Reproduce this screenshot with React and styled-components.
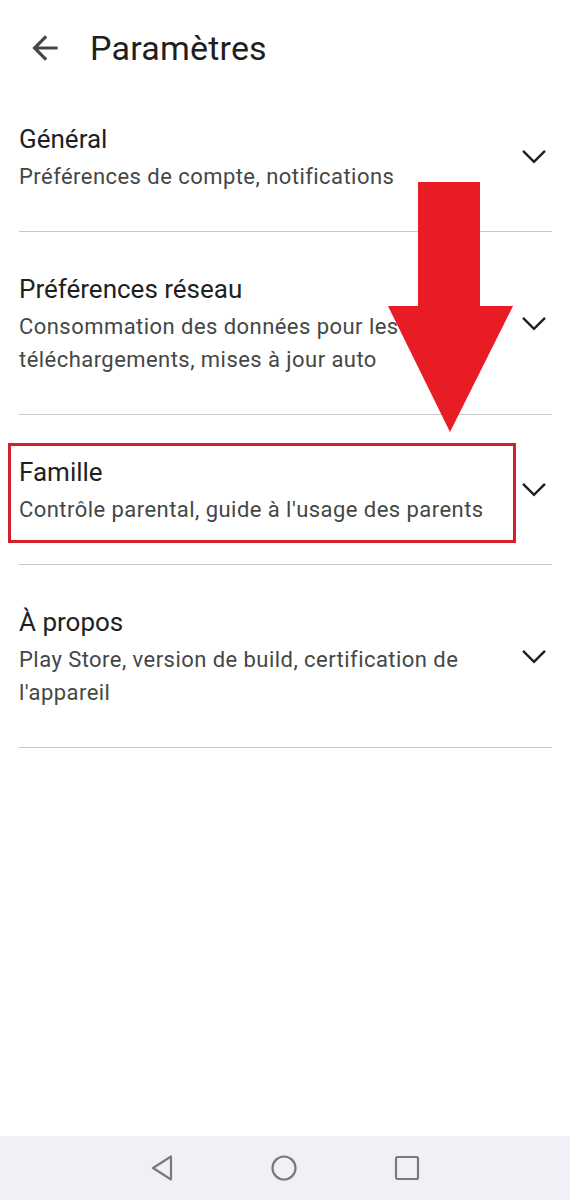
import styled, { createGlobalStyle } from "styled-components";

const GlobalStyle = createGlobalStyle`
  body {
    margin: 0;
    background: #fff;
    font-family: Roboto, "Noto Sans", "Liberation Sans", sans-serif;
  }
`;

const Page = styled.div`
  position: relative;
  width: 570px;
  height: 1200px;
  display: flex;
  flex-direction: column;
  background: #fff;
  overflow: hidden;
`;

const Header = styled.header`
  height: 96px;
  display: flex;
  align-items: center;
  padding-left: 26px;
  gap: 26px;
  svg {
    display: block;
  }
`;

const Title = styled.h1`
  margin: 0;
  font-size: 34px;
  font-weight: 400;
  color: #1f1f1f;
  letter-spacing: 0.2px;
`;

const List = styled.div`
  padding: 0 18px 0 19px;
`;

const Section = styled.div`
  display: flex;
  align-items: center;
  padding: ${(p) => (p.first ? "28px" : "42px")} 0 38px;
  border-bottom: 1px solid #c8c8c8;
`;

const TextBlock = styled.div`
  position: relative;
  flex: 1;
  max-width: 482px;
  ${(p) =>
    p.highlight &&
    `
    &::after {
      content: "";
      position: absolute;
      top: -14px;
      bottom: -17px;
      left: -11px;
      right: -15px;
      border: 3px solid #d3202b;
    }
  `}
`;

const ItemTitle = styled.div`
  font-size: 26px;
  line-height: 30px;
  color: #1f1f1f;
  margin-bottom: 6px;
`;

const ItemSub = styled.div`
  font-size: 22px;
  line-height: 33px;
  letter-spacing: 0.45px;
  color: #444746;
`;

const ChevronBox = styled.div`
  margin-left: auto;
  margin-bottom: 5px;
  width: 36px;
  display: flex;
  justify-content: center;
  svg {
    display: block;
  }
`;

const Arrow = styled.svg`
  position: absolute;
  left: 388px;
  top: 180px;
`;

const NavBar = styled.nav`
  margin-top: auto;
  height: 64px;
  background: #eff1f6;
  display: flex;
  align-items: center;
  justify-content: center;
  gap: 96px;
  svg {
    display: block;
  }
`;

const Chevron = () => (
  <svg width="28" height="28" viewBox="0 0 24 24">
    <path d="M2.6 7.6L12 17l9.4-9.4" fill="none" stroke="#1f1f1f" strokeWidth="2.1" />
  </svg>
);

const items = [
  { title: "Général", sub: "Préférences de compte, notifications" },
  {
    title: "Préférences réseau",
    sub: "Consommation des données pour les téléchargements, mises à jour auto",
  },
  {
    title: "Famille",
    sub: "Contrôle parental, guide à l'usage des parents",
    highlight: true,
  },
  {
    title: "À propos",
    sub: "Play Store, version de build, certification de l'appareil",
  },
];

const App = () => {
  return (
    <Page>
      <GlobalStyle />
      <Header>
        <svg width="38" height="38" viewBox="0 0 24 24">
          <path
            d="M20 11H7.83l5.59-5.59L12 4l-8 8 8 8 1.41-1.41L7.83 13H20v-2z"
            fill="#444746"
          />
        </svg>
        <Title>Paramètres</Title>
      </Header>
      <List>
        {items.map((item, i) => (
          <Section key={item.title} first={i === 0}>
            <TextBlock highlight={item.highlight}>
              <ItemTitle>{item.title}</ItemTitle>
              <ItemSub>{item.sub}</ItemSub>
            </TextBlock>
            <ChevronBox>
              <Chevron />
            </ChevronBox>
          </Section>
        ))}
      </List>
      <Arrow width="126" height="254" viewBox="0 0 126 254">
        <path d="M30 2h62v124h33L62 252 0 126h30z" fill="#e81c25" />
      </Arrow>
      <NavBar>
        <svg width="24" height="30" viewBox="0 0 24 30">
          <path
            d="M21 3.5v23L3 15z"
            fill="none"
            stroke="#7a7a7a"
            strokeWidth="2.2"
            strokeLinejoin="round"
          />
        </svg>
        <svg width="28" height="28" viewBox="0 0 28 28">
          <circle cx="14" cy="14" r="11.5" fill="none" stroke="#7a7a7a" strokeWidth="2.2" />
        </svg>
        <svg width="26" height="26" viewBox="0 0 26 26">
          <rect x="2" y="2" width="22" height="22" rx="1.5" fill="none" stroke="#7a7a7a" strokeWidth="2.2" />
        </svg>
      </NavBar>
    </Page>
  );
};

export default App;
